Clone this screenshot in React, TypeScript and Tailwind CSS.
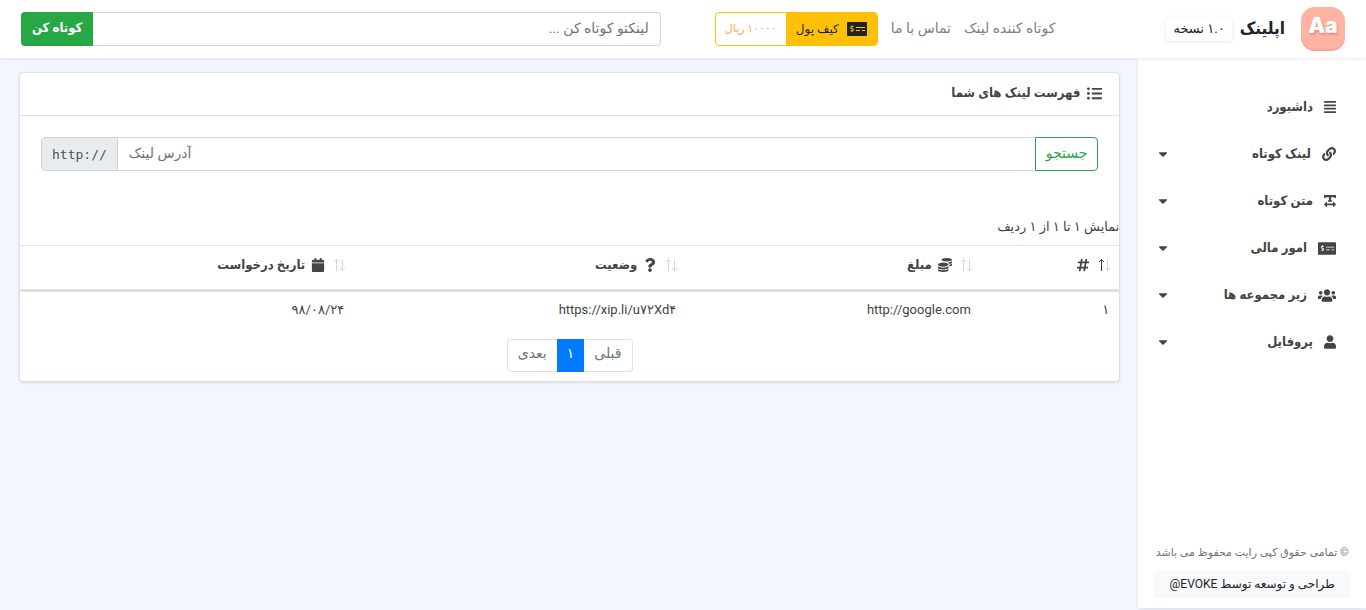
import {
  FaAlignJustify,
  FaCalendar,
  FaCaretDown,
  FaCoins,
  FaHashtag,
  FaLink,
  FaListUl,
  FaMoneyCheckAlt,
  FaQuestion,
  FaTextWidth,
  FaUser,
  FaUsers,
} from "react-icons/fa";
import type { IconType } from "react-icons";

const menu: { label: string; icon: IconType; open: boolean; size: string }[] = [
  { label: "داشبورد", icon: FaAlignJustify, open: false, size: "w-3 h-[14px]" },
  { label: "لینک کوتاه", icon: FaLink, open: true, size: "w-[14px] h-[14px]" },
  { label: "متن کوتاه", icon: FaTextWidth, open: true, size: "w-3 h-[14px]" },
  { label: "امور مالی", icon: FaMoneyCheckAlt, open: true, size: "w-[18px] h-[15px]" },
  { label: "زیر مجموعه ها", icon: FaUsers, open: true, size: "w-[18px] h-[15px]" },
  { label: "پروفایل", icon: FaUser, open: true, size: "w-3 h-[14px]" },
];

const columns: { label: string; icon: IconType; width: string; sorted: boolean }[] = [
  { label: "", icon: FaHashtag, width: "w-[12.6%]", sorted: true },
  { label: "مبلغ", icon: FaCoins, width: "w-[26.8%]", sorted: false },
  { label: "وضعیت", icon: FaQuestion, width: "w-[30.2%]", sorted: false },
  { label: "تاریخ درخواست", icon: FaCalendar, width: "w-[30.4%]", sorted: false },
];

function Logo() {
  return (
    <span className="flex size-11 items-start justify-center rounded-[14px] bg-[#ffb3a3] pt-[5px] shadow-[inset_0_-2px_0_#fba598]">
      <span
        dir="ltr"
        className="font-[Inter,sans-serif] text-[21px] leading-7 font-black text-white [text-shadow:1px_2px_2px_#f58a80]"
      >
        Aa
      </span>
    </span>
  );
}

function SortArrows({ sorted }: { sorted: boolean }) {
  return (
    <svg viewBox="0 0 13 14" className="h-[14px] w-[13px] shrink-0" fill="none" aria-hidden="true">
      <path d="M3.5 13V1.5M1 4l2.5-2.5L6 4" stroke={sorted ? "#444" : "#d6d6da"} />
      <path d="M9.5 1v11.5M7 10l2.5 2.5L12 10" stroke="#d6d6da" />
    </svg>
  );
}

function Header() {
  return (
    <header className="relative z-10 flex h-[58px] items-center bg-white px-[21px] shadow-[0_1px_3px_rgba(0,0,0,0.1)]">
      <a href="#" className="flex shrink-0 items-center">
        <Logo />
        <span className="mr-4 font-[Roboto,'DejaVu_Sans_Condensed',sans-serif] text-[17px] font-bold text-[#212529]">
          اپلینک
        </span>
      </a>
      <span className="mr-2 shrink-0 rounded bg-white px-[7px] text-[13px] leading-6 text-[#212529] shadow-[0_1px_4px_rgba(0,0,0,0.1)]">
        ۱.۰ نسخه
      </span>
      <nav className="mr-[111px] flex shrink-0 gap-[13px] pb-[2px] text-sm text-[#808080]">
        <a href="#">کوتاه کننده لینک</a>
        <a href="#">تماس با ما</a>
      </nav>
      <div className="mr-[13px] flex h-[34px] shrink-0 overflow-hidden rounded border border-[#ffc107] text-xs">
        <button type="button" className="flex items-center gap-2 bg-[#ffc107] px-[10px] text-[#212529]">
          <FaMoneyCheckAlt className="h-4 w-5" />
          کیف پول
        </button>
        <span className="flex items-center px-[9px] text-[11px] text-[#ffa64d]">۱۰۰۰۰ ریال</span>
      </div>
      <form className="mr-[54px] flex h-[34px] min-w-0 flex-1" onSubmit={(e) => e.preventDefault()}>
        <input
          aria-label="لینک"
          placeholder="لینکتو کوتاه کن ..."
          className="min-w-0 flex-1 rounded-r border border-l-0 border-[#ced4da] bg-white px-[11px] pb-[2px] text-sm outline-none placeholder:text-[#6c757d]"
        />
        <button
          type="submit"
          className="shrink-0 rounded-l bg-[#28a745] px-[11px] pb-[2px] font-[Roboto,'DejaVu_Sans_Condensed',sans-serif] text-[13px] font-bold text-white"
        >
          کوتاه کن
        </button>
      </form>
    </header>
  );
}

function Sidebar() {
  return (
    <aside className="mb-[2px] flex w-1/6 shrink-0 flex-col bg-white pt-[26px] shadow-[0_1px_3px_rgba(0,0,0,0.1)]">
      <ul className="font-[Roboto,'DejaVu_Sans_Condensed',sans-serif] text-[13px] font-bold">
        {menu.map(({ label, icon: Icon, open, size }) => (
          <li key={label}>
            <a href="#" className="flex h-[47px] items-center pr-[30px] pb-px pl-[18px]">
              <Icon className={`shrink-0 ${size}`} />
              <span className="mr-[11px] flex-1">{label}</span>
              {open && <FaCaretDown className="size-[14px]" />}
            </a>
          </li>
        ))}
      </ul>
      <footer className="mt-auto px-[15px] pb-[10px] text-center text-xs">
        <p className="text-[11px] leading-6 whitespace-nowrap text-[#6c757d]">© تمامی حقوق کپی رایت محفوظ می باشد</p>
        <a href="#" className="mt-[6px] block rounded bg-[#f8f9fa] leading-[27px] whitespace-nowrap text-[#212529]">
          طراحی و توسعه توسط EVOKE@
        </a>
      </footer>
    </aside>
  );
}

function LinksCard() {
  return (
    <section className="rounded-sm border border-[#dcdfe3] bg-white shadow-[0_1px_3px_rgba(0,0,0,0.1)]">
      <h1 className="flex h-[43px] items-center gap-[7px] border-b border-[#dfe1e5] pr-[17px] pb-[2px] font-[Roboto,'DejaVu_Sans_Condensed',sans-serif] text-[13px] font-bold">
        <FaListUl className="size-[15px]" />
        فهرست لینک های شما
      </h1>
      <form className="mx-[21px] mt-[21px] flex h-[34px]" onSubmit={(e) => e.preventDefault()}>
        <button type="submit" className="rounded-r border border-[#28a745] px-[10px] pb-[2px] text-sm text-[#28a745]">
          جستجو
        </button>
        <input
          dir="ltr"
          aria-label="آدرس لینک"
          placeholder="آدرس لینک"
          className="min-w-0 flex-1 border-y border-[#ced4da] px-[11px] pb-[2px] text-sm outline-none placeholder:text-[#6c757d]"
        />
        <span
          dir="ltr"
          className="flex items-center rounded-l border border-[#ced4da] bg-[#e9ecef] px-[10px] pt-[2px] font-['DejaVu_Sans_Mono',monospace] text-[13px] text-[#495057]"
        >
          http://
        </span>
      </form>
      <p className="mt-11 text-[13px] leading-6">نمایش ۱ تا ۱ از ۱ ردیف</p>
      <table className="mt-[6px] w-full table-fixed border-t border-[#dee2e6] text-[13px]">
        <thead>
          <tr className="h-[45px] border-b-3 border-[#dee2e6]">
            {columns.map(({ label, icon: Icon, width, sorted }) => (
              <th
                key={width}
                className={`pr-2 pb-[5px] text-right font-[Roboto,'DejaVu_Sans_Condensed',sans-serif] font-bold ${width}`}
              >
                <span className="flex items-center">
                  <SortArrows sorted={sorted} />
                  <Icon className="mr-2 size-[14px]" />
                  <span className="mr-[6px]">{label}</span>
                </span>
              </th>
            ))}
          </tr>
        </thead>
        <tbody>
          <tr className="h-9">
            <td className="pr-[10px]">۱</td>
            <td className="pr-[10px]">http://google.com</td>
            <td className="pr-[10px]">https://xip.li/u۷۲Xd۴</td>
            <td className="pr-[10px]">۹۸/۰۸/۲۴</td>
          </tr>
        </tbody>
      </table>
      <nav aria-label="صفحه‌ها" className="mt-3 mb-[9px] flex h-[33px] justify-center text-sm text-[#6c757d]">
        <button type="button" className="rounded-r border border-l-0 border-[#dee2e6] px-[10px] pb-1">
          قبلی
        </button>
        <button type="button" className="bg-[#007bff] px-[10px] pb-1 text-white">
          ۱
        </button>
        <button type="button" className="rounded-l border border-r-0 border-[#dee2e6] px-[10px] pb-1">
          بعدی
        </button>
      </nav>
    </section>
  );
}

export default function App() {
  return (
    <div
      dir="rtl"
      className="flex min-h-screen flex-col bg-[#f3f6ff] font-[Roboto,'DejaVu_Sans',sans-serif] text-[#444]"
    >
      <Header />
      <div className="flex flex-1">
        <Sidebar />
        <main className="min-w-0 flex-1 pt-[14px] pr-[18px] pl-[19px]">
          <LinksCard />
        </main>
      </div>
    </div>
  );
}
